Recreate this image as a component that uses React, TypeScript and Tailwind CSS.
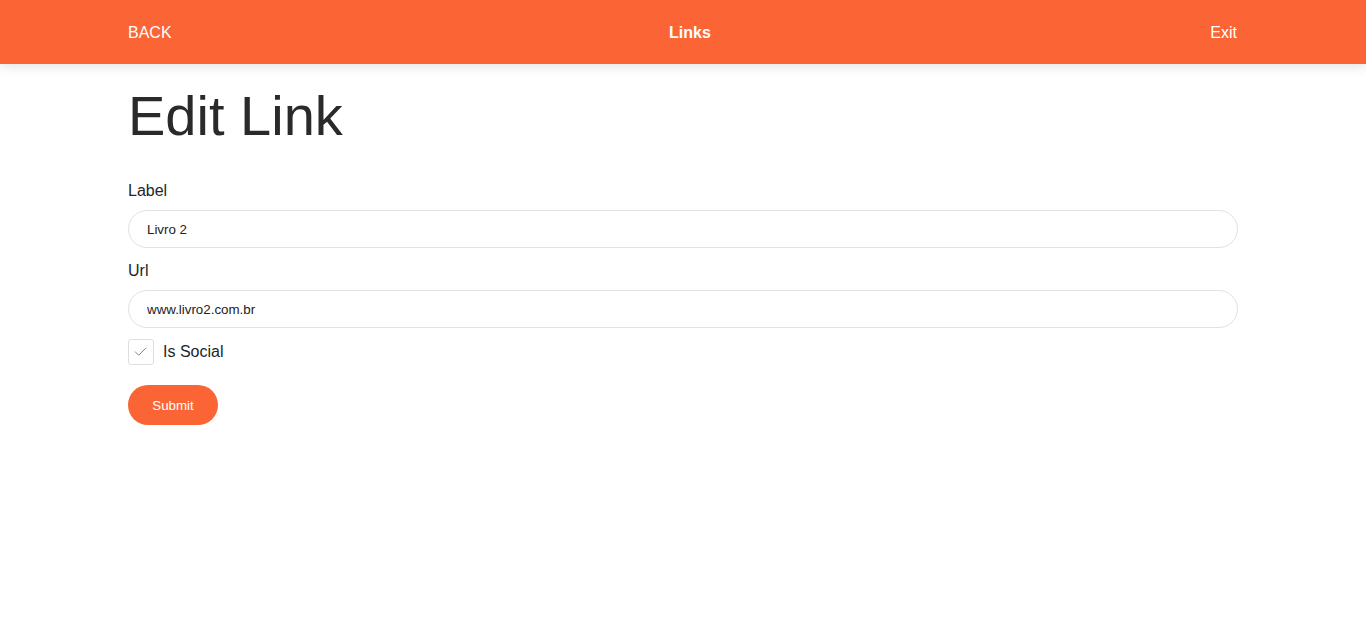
function Header() {
  return (
    <header className="h-16 bg-[#fb6434] shadow-[0_2px_12px_rgba(0,0,0,0.12)]">
      <div className="mx-auto flex h-full w-[1110px] items-center justify-between pt-[2px] text-white text-base">
        <a href="#">BACK</a>
        <span className="font-bold pr-[2px]">Links</span>
        <a href="#" className="pr-px">Exit</a>
      </div>
    </header>
  );
}

export default function App() {
  return (
    <div className="min-h-screen bg-white font-['Liberation_Sans',Arial,sans-serif] text-[#212529]">
      <Header />
      <main className="mx-auto w-[1110px] pt-[18px]">
        <h1 className="text-[56px] leading-[67px] text-[#2a2a2a] font-light mb-[30px]">
          Edit Link
        </h1>
        <form className="flex flex-col">
          <label className="text-base leading-6 mb-[7px]">Label</label>
          <input
            className="h-[38px] rounded-full border border-[#e2e2e2] px-[18px] text-[13.33px] text-[#222] outline-none"
            defaultValue="Livro 2"
          />
          <label className="text-base leading-6 mb-[7px] mt-[11px]">Url</label>
          <input
            className="h-[38px] rounded-full border border-[#e2e2e2] px-[18px] text-[13.33px] text-[#222] outline-none"
            defaultValue="www.livro2.com.br"
          />
          <div className="mt-[11px] flex items-center gap-[9px]">
            <span className="flex h-[26px] w-[26px] items-center justify-center rounded-[3px] border border-[#dedede]">
              <svg width="26" height="26" viewBox="0 0 26 26" fill="none">
                <path d="M6.5 12.5 L10.5 16.5 L18.5 8.5" stroke="#7a7a7a" strokeWidth="1" />
              </svg>
            </span>
            <span className="text-base leading-6">Is Social</span>
          </div>
          <div className="mt-5">
            <button
              type="button"
              className="h-10 w-[90px] rounded-full bg-[#fb6434] pt-[2px] text-[13.33px] text-white"
            >
              Submit
            </button>
          </div>
        </form>
      </main>
    </div>
  );
}
